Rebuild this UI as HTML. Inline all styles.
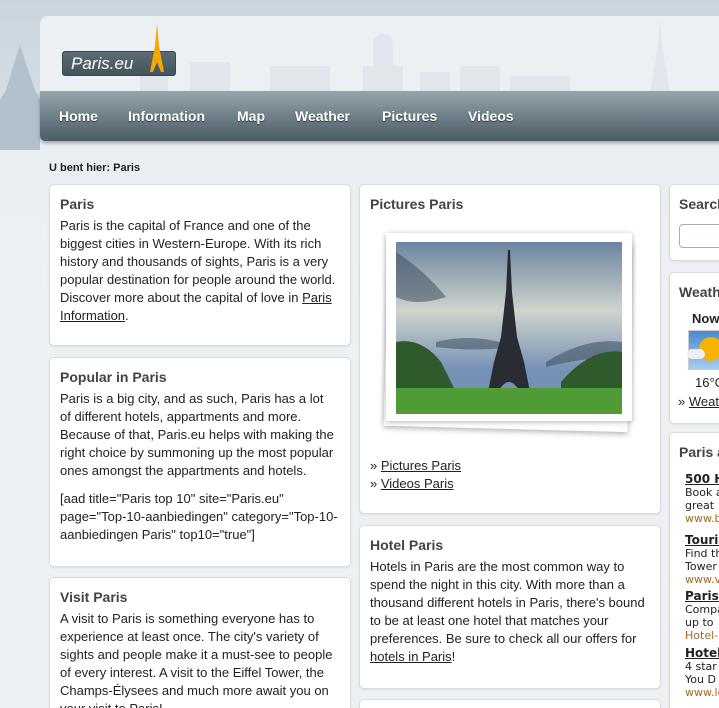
<!DOCTYPE html>
<html style="width:719px;height:708px;overflow:hidden"><head><meta charset="utf-8"><style>
*{margin:0;padding:0;box-sizing:border-box}
body{width:719px;height:708px;overflow:hidden;background:linear-gradient(#c9d5de 0,#d3dce4 90px,#e9eef2 150px,#eef1f4 300px);font-family:"Liberation Sans",Arial,sans-serif;color:#222;position:relative}
.hdr{position:absolute;left:40px;top:16px;width:700px;height:80px;background:#ecf0f3;border-radius:8px 0 0 0}
.nav{position:absolute;left:40px;top:91px;width:700px;height:50px;background:linear-gradient(#95a5ad,#6f8089 50%,#4b5c66);border-radius:0 0 0 5px;box-shadow:0 2px 3px rgba(0,0,0,.3)}
.nav span{position:absolute;top:17px;color:#fff;font-weight:bold;font-size:14px;text-shadow:0 1px 1px #333}
.logo{position:absolute;left:62px;top:51px;width:114px;height:25px;background:linear-gradient(#5b6c75,#44545d);border-radius:3px;border:1px solid #3a4850}
.logo b{position:absolute;left:8px;top:2px;color:#fff;font-style:italic;font-size:17px;font-weight:normal}
.crumb{position:absolute;left:49px;top:162px;font-size:11px;font-weight:bold;color:#222}
.box{position:absolute;background:#fff;border:1px solid #d6dce0;border-radius:5px;box-shadow:0 1px 2px rgba(0,0,0,.08);overflow:hidden}
.box h3{position:absolute;left:10px;top:11px;font-size:14px;color:#444;font-weight:bold;white-space:nowrap}
.box p{position:absolute;left:10px;font-size:13px;line-height:18px;color:#222;white-space:nowrap}
a{color:#222;text-decoration:underline}
</style></head><body>
<svg style="position:absolute;left:0;top:0" width="40" height="150">
<path d="M0 100 L6 90 L12 70 L20 45 L28 70 L35 90 L40 100 L40 150 L0 150Z" fill="#b3c1cc"/></svg>
<div class="hdr"></div>
<svg style="position:absolute;left:40px;top:16px" width="680" height="76"><g fill="#e0e6ec"><path d="M100 76V52h8v-6h20v30z M150 76V46h40v30z M230 76V50h60v26z M323 76V50h10V28a10 10 0 0 1 20 0V50h10v26z M380 76V56h30v20z M420 76V50h40v26z M470 76V60h60v16z M610 76L618 30 620 0 622 30 630 76z"/></g></svg>
<div class="logo"><b>Paris.eu</b></div>
<svg style="position:absolute;left:147px;top:24px" width="20" height="50"><path d="M10 0 L11 10 L12 22 L17 48 L14 48 L10 38 L6 48 L3 48 L8 22 L9 10Z" fill="#f5a800"/></svg>
<div class="nav"><span style="left:19px">Home</span><span style="left:88px">Information</span><span style="left:197px">Map</span><span style="left:255px">Weather</span><span style="left:342px">Pictures</span><span style="left:428px">Videos</span></div>
<div class="crumb">U bent hier: Paris</div>

<div class="box" style="left:49px;top:184px;width:302px;height:162px"><h3>Paris</h3><p style="top:32px">Paris is the capital of France and one of the<br>biggest cities in Western-Europe. With its rich<br>history and thousands of sights, Paris is a very<br>popular destination for people around the world.<br>Discover more about the capital of love in <a>Paris</a><br><a>Information</a>.</p></div>
<div class="box" style="left:49px;top:357px;width:302px;height:210px"><h3>Popular in Paris</h3><p style="top:32px">Paris is a big city, and as such, Paris has a lot<br>of different hotels, appartments and more.<br>Because of that, Paris.eu helps with making the<br>right choice by summoning up the most popular<br>ones amongst the appartments and hotels.</p><p style="top:132px">[aad title="Paris top 10" site="Paris.eu"<br>page="Top-10-aanbiedingen" category="Top-10-<br>aanbiedingen Paris" top10="true"]</p></div>
<div class="box" style="left:49px;top:577px;width:302px;height:150px"><h3>Visit Paris</h3><p style="top:32px">A visit to Paris is something everyone has to<br>experience at least once. The city's variety of<br>sights and people make it a must-see to people<br>of every interest. A visit to the Eiffel Tower, the<br>Champs-Élysees and much more await you on<br>your visit to Paris!</p></div>

<div class="box" style="left:359px;top:184px;width:302px;height:330px"><h3>Pictures Paris</h3>
<div style="position:absolute;left:26px;top:54px;width:244px;height:190px;background:#fff;box-shadow:0 2px 6px rgba(0,0,0,.3);transform:rotate(1.5deg)"></div>
<div style="position:absolute;left:26px;top:48px;width:246px;height:188px;background:#fff;box-shadow:0 1px 5px rgba(0,0,0,.3)"></div>
<svg style="position:absolute;left:36px;top:57px" width="226" height="172"><defs><linearGradient id="s" x1="0" y1="0" x2="0" y2="1"><stop offset="0" stop-color="#6a84a0"/><stop offset=".4" stop-color="#d0d4cc"/><stop offset=".75" stop-color="#7490b4"/></linearGradient></defs>
<rect width="226" height="172" fill="url(#s)"/><path d="M0 10 Q30 30 50 55 Q20 65 0 55Z M40 100 Q80 90 120 105 Q80 110 40 105Z M150 120 Q190 95 226 100 L226 115 Q190 115 150 125Z" fill="#3e4c60" opacity=".55"/>
<path d="M0 100 Q25 95 45 120 L60 150 L0 150Z M165 140 Q195 105 226 110 L226 150 L165 150Z" fill="#2e5a2c"/>
<path d="M112 8 L114 8 L116 50 L121 95 L128 120 L134 150 L124 150 Q113 130 102 150 L92 150 L98 120 L105 95 L110 50Z" fill="#2a2c34"/>
<rect y="146" width="226" height="26" fill="#4f9b35"/></svg>
<p style="top:272px">» <a>Pictures Paris</a><br>» <a>Videos Paris</a></p></div>
<div class="box" style="left:359px;top:525px;width:302px;height:164px"><h3>Hotel Paris</h3><p style="top:32px">Hotels in Paris are the most common way to<br>spend the night in this city. With more than a<br>thousand different hotels in Paris, there's bound<br>to be at least one hotel that matches your<br>preferences. Be sure to check all our offers for<br><a>hotels in Paris</a>!</p></div>
<div class="box" style="left:359px;top:699px;width:302px;height:40px"></div>

<div class="box" style="left:669px;top:184px;width:60px;height:77px"><h3 style="left:9px">Search</h3><div style="position:absolute;left:9px;top:39px;width:60px;height:24px;border:1px solid #aab;border-radius:4px"></div></div>
<div class="box" style="left:669px;top:272px;width:60px;height:152px"><h3 style="left:9px">Weather</h3><p style="top:37px;left:22px;font-weight:bold">Now</p><div style="position:absolute;left:18px;top:57px;width:40px;height:40px;background:linear-gradient(#4a8ad0,#a4ccee);border:1px solid #ccc"><div style="position:absolute;left:10px;top:6px;width:24px;height:24px;border-radius:50%;background:#f4b400"></div><div style="position:absolute;left:-2px;top:18px;width:18px;height:10px;border-radius:6px;background:#eee"></div></div><p style="top:101px;left:25px">16°C</p><p style="top:120px;left:8px">» <a>Weather</a></p></div>
<div class="box" style="left:669px;top:432px;width:60px;height:290px"><h3 style="left:9px">Paris and</h3>
<p style="top:40px;left:15px;font-family:'DejaVu Sans',sans-serif;font-size:11px;line-height:13px"><b style="font-size:12px;text-decoration:underline">500 H</b><br>Book a<br>great<br><span style="color:#a06a20">www.bo</span></p>
<p style="top:101px;left:15px;font-family:'DejaVu Sans',sans-serif;font-size:11px;line-height:13px"><b style="font-size:12px;text-decoration:underline">Touris</b><br>Find th<br>Tower<br><span style="color:#a06a20">www.vi</span></p>
<p style="top:157px;left:15px;font-family:'DejaVu Sans',sans-serif;font-size:11px;line-height:13px"><b style="font-size:12px;text-decoration:underline">Paris</b><br>Compa<br>up to<br><span style="color:#a06a20">Hotel-l</span></p>
<p style="top:214px;left:15px;font-family:'DejaVu Sans',sans-serif;font-size:11px;line-height:13px"><b style="font-size:12px;text-decoration:underline">Hotel</b><br>4 star<br>You D<br><span style="color:#a06a20">www.le</span></p></div>
</body></html>
